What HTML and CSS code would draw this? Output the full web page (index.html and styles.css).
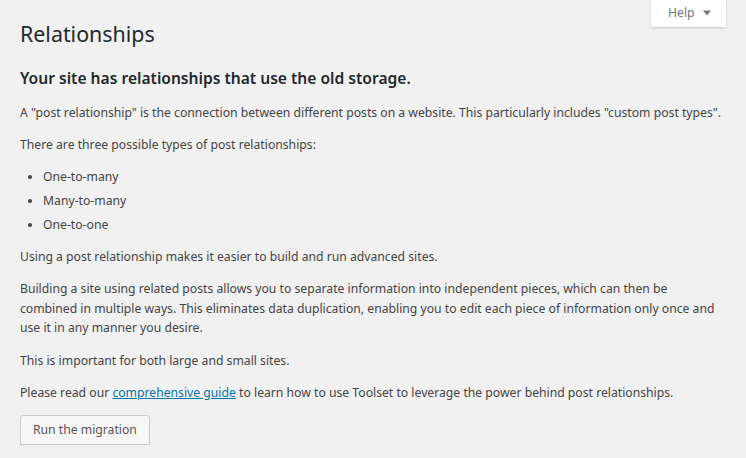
FILE: index.html
```html
<!DOCTYPE html>
<html>
<head>
<meta charset="utf-8">
<link rel="stylesheet" href="styles.css">
</head>
<body>
<div class="screen-meta-links">
  <button class="help-toggle">Help <svg class="arrow" width="10" height="10" viewBox="0 0 10 10"><path d="M1 2.5h8L5 7.5z" fill="#72777c"/></svg></button>
</div>
<div class="wrap">
  <h1 class="title">Relationships</h1>
  <h2 class="subtitle">Your site has relationships that use the old storage.</h2>
  <p>A "post relationship" is the connection between different posts on a website. This particularly includes "custom post types".</p>
  <p>There are three possible types of post relationships:</p>
  <ul class="types">
    <li>One-to-many</li>
    <li>Many-to-many</li>
    <li>One-to-one</li>
  </ul>
  <p>Using a post relationship makes it easier to build and run advanced sites.</p>
  <p class="narrow">Building a site using related posts allows you to separate information into independent pieces, which can then be combined in multiple ways. This eliminates data duplication, enabling you to edit each piece of information only once and use it in any manner you desire.</p>
  <p>This is important for both large and small sites.</p>
  <p>Please read our <a href="#" class="link">comprehensive guide</a> to learn how to use Toolset to leverage the power behind post relationships.</p>
  <div class="actions"><button class="button-large">Run the migration</button></div>
</div>
</body>
</html>
```
FILE: styles.css
```css
html, body {
  margin: 0;
  padding: 0;
  background: #f1f1f1;
}
body {
  font-family: "Noto Sans", "Open Sans", sans-serif;
  font-size: 12.2px;
  line-height: 18.2px;
  color: #444;
  overflow: hidden;
}
.screen-meta-links {
  float: right;
  margin-right: 20px;
}
.help-toggle {
  display: flex;
  align-items: center;
  gap: 7px;
  height: 27px;
  width: 75px;
  padding: 0 0 2px 17px;
  background: #fff;
  border: none;
  box-shadow: 0 1px 2px rgba(0,0,0,0.18);
  font-family: inherit;
  font-size: 12.2px;
  color: #72777c;
  cursor: pointer;
}
.arrow { margin-top: 1px; }
.wrap {
  margin: 10px 16px 0 20px;
}
.title {
  font-size: 21.4px;
  font-weight: 400;
  line-height: 30px;
  margin: 0;
  padding: 9px 0 4px;
  color: #23282d;
}
.subtitle {
  font-size: 15.6px;
  font-weight: 600;
  color: #23282d;
  margin: 14px 0 14px;
  line-height: 22px;
}
p {
  font-size: 12.2px;
  line-height: 19.5px;
  margin: 12.8px 0;
}
.narrow { max-width: 698px; }
.types {
  margin: 0 0 0 23px;
  padding: 0;
  list-style: disc;
}
.types li {
  margin-bottom: 6px;
  line-height: 18.2px;
}
.link {
  color: #0073aa;
  text-decoration: underline;
}
.actions {
  display: flex;
  margin-top: 8px;
}
.button-large {
  height: 30px;
  line-height: 28px;
  padding: 0 12px 2px;
  font-family: inherit;
  font-size: 12.2px;
  color: #555;
  background: #f7f7f7;
  border: 1px solid #ccc;
  border-radius: 3px;
  box-shadow: 0 1px 0 #ccc;
  cursor: pointer;
}
```
